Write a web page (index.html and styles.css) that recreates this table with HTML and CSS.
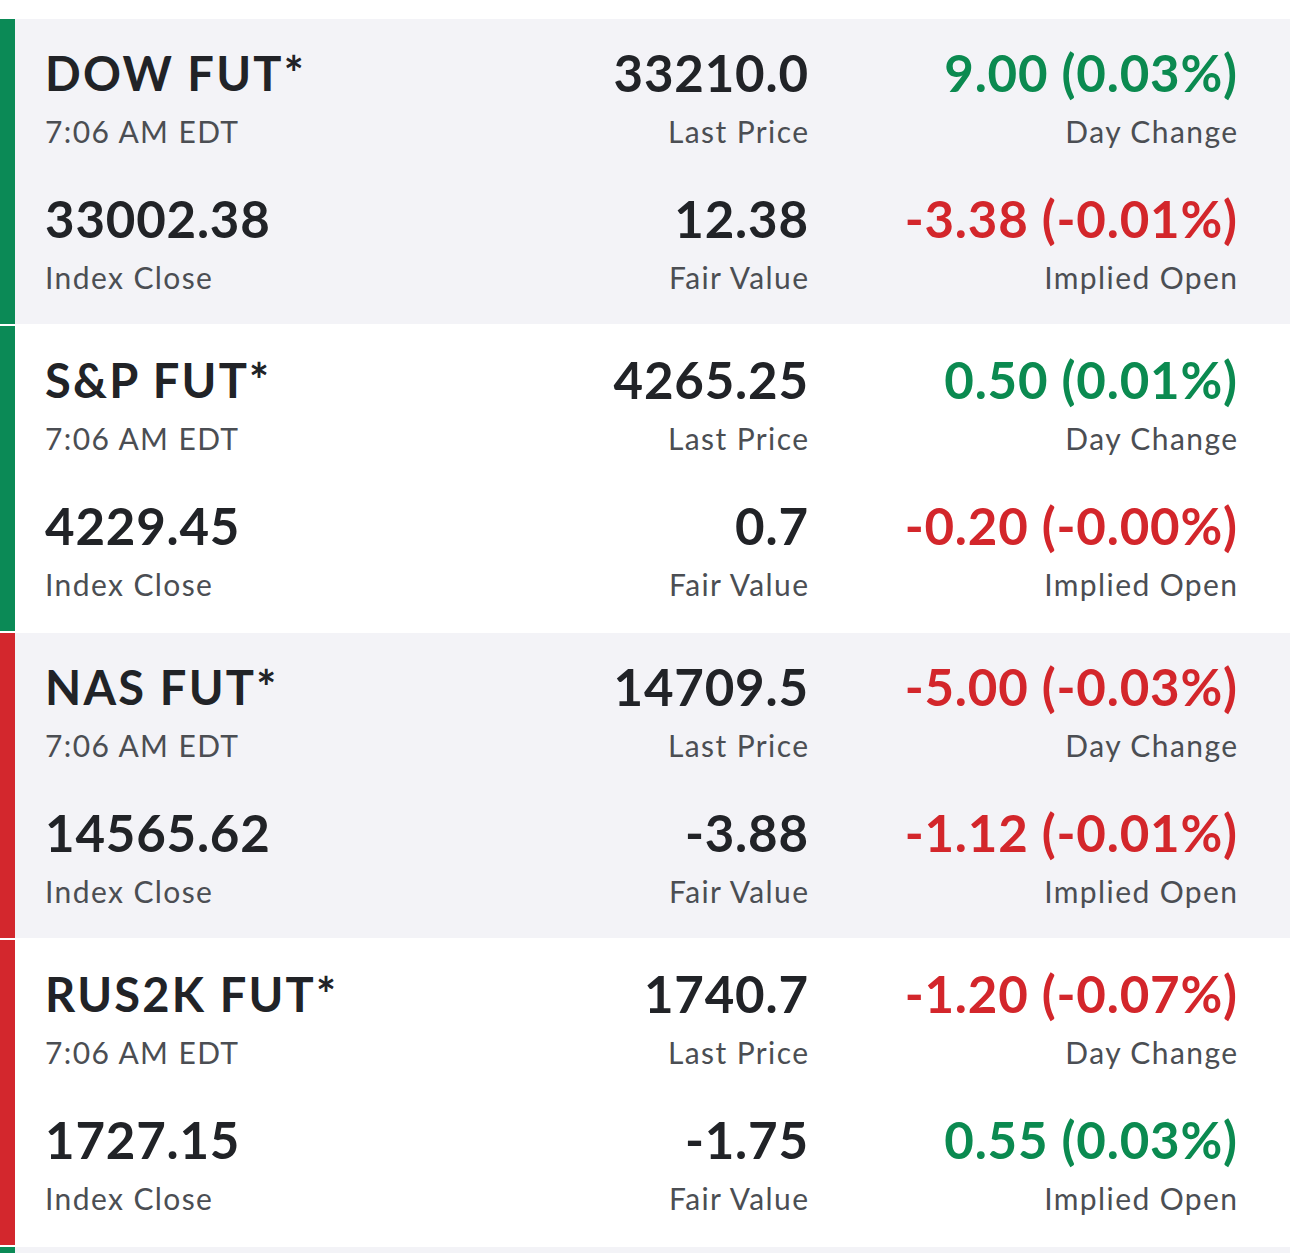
FILE: index.html
```html
<!DOCTYPE html>
<html>
<head>
<meta charset="utf-8">
<link rel="stylesheet" href="styles.css">
</head>
<body>
<div class="list">
  <div class="row up shade">
    <div class="cell left"><div class="val name">DOW FUT*</div><div class="lbl">7:06 AM EDT</div></div>
    <div class="cell mid"><div class="val">33210.0</div><div class="lbl">Last Price</div></div>
    <div class="cell right"><div class="val pos">9.00 (0.03%)</div><div class="lbl">Day Change</div></div>
    <div class="cell left"><div class="val">33002.38</div><div class="lbl">Index Close</div></div>
    <div class="cell mid"><div class="val">12.38</div><div class="lbl">Fair Value</div></div>
    <div class="cell right"><div class="val neg">-3.38 (-0.01%)</div><div class="lbl">Implied Open</div></div>
  </div>
  <div class="row up">
    <div class="cell left"><div class="val name">S&amp;P FUT*</div><div class="lbl">7:06 AM EDT</div></div>
    <div class="cell mid"><div class="val">4265.25</div><div class="lbl">Last Price</div></div>
    <div class="cell right"><div class="val pos">0.50 (0.01%)</div><div class="lbl">Day Change</div></div>
    <div class="cell left"><div class="val">4229.45</div><div class="lbl">Index Close</div></div>
    <div class="cell mid"><div class="val">0.7</div><div class="lbl">Fair Value</div></div>
    <div class="cell right"><div class="val neg">-0.20 (-0.00%)</div><div class="lbl">Implied Open</div></div>
  </div>
  <div class="row down shade">
    <div class="cell left"><div class="val name">NAS FUT*</div><div class="lbl">7:06 AM EDT</div></div>
    <div class="cell mid"><div class="val">14709.5</div><div class="lbl">Last Price</div></div>
    <div class="cell right"><div class="val neg">-5.00 (-0.03%)</div><div class="lbl">Day Change</div></div>
    <div class="cell left"><div class="val">14565.62</div><div class="lbl">Index Close</div></div>
    <div class="cell mid"><div class="val">-3.88</div><div class="lbl">Fair Value</div></div>
    <div class="cell right"><div class="val neg">-1.12 (-0.01%)</div><div class="lbl">Implied Open</div></div>
  </div>
  <div class="row down">
    <div class="cell left"><div class="val name">RUS2K FUT*</div><div class="lbl">7:06 AM EDT</div></div>
    <div class="cell mid"><div class="val">1740.7</div><div class="lbl">Last Price</div></div>
    <div class="cell right"><div class="val neg">-1.20 (-0.07%)</div><div class="lbl">Day Change</div></div>
    <div class="cell left"><div class="val">1727.15</div><div class="lbl">Index Close</div></div>
    <div class="cell mid"><div class="val">-1.75</div><div class="lbl">Fair Value</div></div>
    <div class="cell right"><div class="val pos">0.55 (0.03%)</div><div class="lbl">Implied Open</div></div>
  </div>
  <div class="row up shade stub"></div>
</div>
</body>
</html>
```
FILE: styles.css
```css
html, body {
  margin: 0;
  padding: 0;
  background: #ffffff;
}
body {
  font-family: "Lato", "Open Sans", sans-serif;
  color: #212327;
  overflow: hidden;
  height: 1253px;
}
.list {
  padding-top: 19px;
  display: flex;
  flex-direction: column;
  gap: 2px;
}
.row {
  height: 305px;
  flex: none;
  box-sizing: border-box;
  border-left: 15px solid #0b8a56;
  background: #ffffff;
  padding: 26px 53px 0 30px;
  display: grid;
  grid-template-columns: 1fr 308px 429px;
  row-gap: 40px;
  align-content: start;
}
.row.stub {
  height: 6px;
  padding: 0;
}
.row.shade { background: #f3f3f7; }
.row.down { border-left-color: #d3272d; }
.cell { display: flex; flex-direction: column; }
.mid, .right { align-items: flex-end; text-align: right; }
.val {
  font-size: 51px;
  line-height: 56px;
  font-weight: 700;
  letter-spacing: 0.8px;
  white-space: nowrap;
}
.val.name {
  font-size: 47px;
  letter-spacing: 2.2px;
}
.lbl {
  font-size: 30px;
  line-height: 40px;
  margin-top: 10px;
  letter-spacing: 1.4px;
  color: #4b4e53;
  white-space: nowrap;
}
.mid .val, .right .val { margin-right: -0.8px; }
.mid .lbl, .right .lbl { margin-right: -1.4px; }
.pos { color: #0b8a50; }
.neg { color: #d3262b; }
```
